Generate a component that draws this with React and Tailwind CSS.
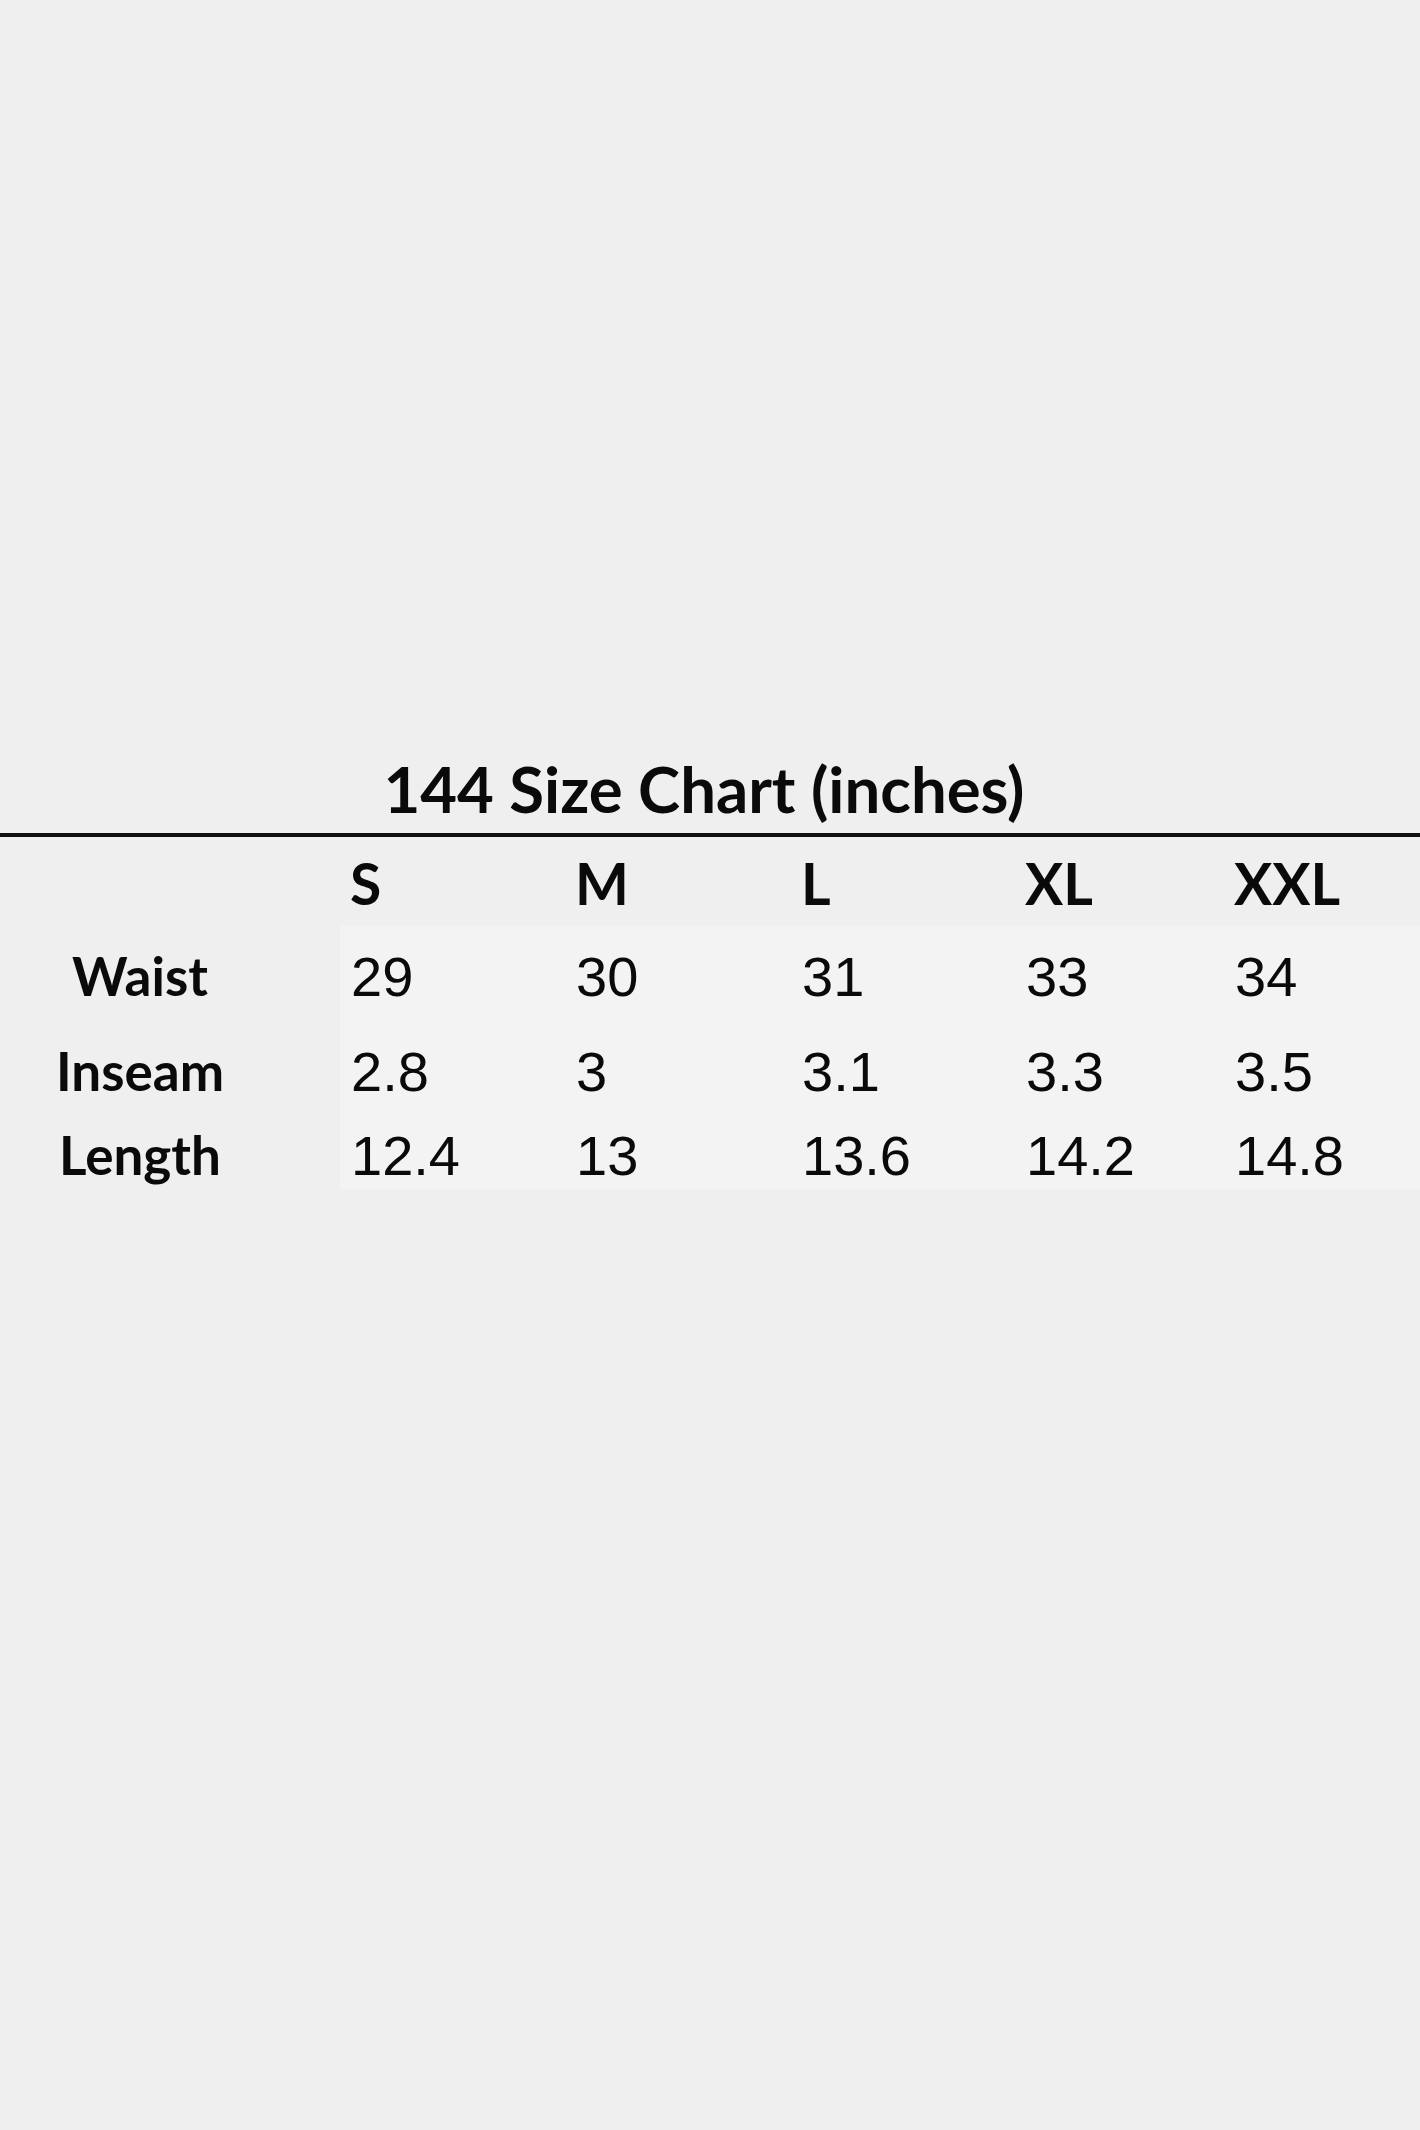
import React from 'react';

const sizes = ['S', 'M', 'L', 'XL', 'XXL'];

const rows = [
  { label: 'Waist', values: ['29', '30', '31', '33', '34'], box: 'h-[95px] pt-[23px]' },
  { label: 'Inseam', values: ['2.8', '3', '3.1', '3.3', '3.5'], box: 'h-[90px] pt-[23px]' },
  { label: 'Length', values: ['12.4', '13', '13.6', '14.2', '14.8'], box: 'h-[78px] pt-[17px]' },
];

const cols = 'grid grid-cols-[225px_226px_224px_209px_1fr]';

const App = () => {
  return (
    <div className="min-h-screen w-full bg-[#efefef] text-[#0a0a0a] flex flex-col pt-[757px]">
      <h1 className="text-center pr-[12px] text-[63.5px] leading-none font-bold font-['Lato',sans-serif]">
        144 Size Chart (inches)
      </h1>

      <div className="mt-[12px] h-[4px] w-full bg-[#111]" />

      {/* header row */}
      <div className="flex h-[89px] pt-[18px]">
        <div className="w-[340px] shrink-0" />
        <div className={`${cols} flex-1`}>
          {sizes.map((s) => (
            <div key={s} className="pl-[10px] text-[57px] leading-none font-bold font-['Lato',sans-serif]">
              {s}
            </div>
          ))}
        </div>
      </div>

      {/* body */}
      <div className="flex">
        <div className="w-[340px] shrink-0 flex flex-col">
          {rows.map((r) => (
            <div key={r.label} className={r.box}>
              <div className="w-[280px] text-center text-[53px] leading-none font-bold font-['Lato',sans-serif]">
                {r.label}
              </div>
            </div>
          ))}
        </div>
        <div className="flex-1 flex flex-col bg-[#f3f3f3]">
          {rows.map((r) => (
            <div key={r.label} className={`${cols} ${r.box}`}>
              {r.values.map((v, i) => (
                <div key={i} className="pl-[11px] text-[56px] leading-none font-['Liberation_Sans',Arial,sans-serif]">
                  {v}
                </div>
              ))}
            </div>
          ))}
        </div>
      </div>
    </div>
  );
};

export default App;
